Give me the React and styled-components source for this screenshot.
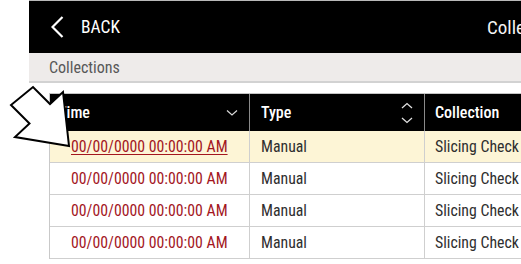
import React from "react";
import styled, { createGlobalStyle } from "styled-components";

const GlobalStyle = createGlobalStyle`
  html, body { margin: 0; padding: 0; background: #ffffff; }
  body {
    font-family: "Roboto Condensed", Roboto, "Liberation Sans", sans-serif;
    overflow: hidden;
  }
`;

const Page = styled.div`
  position: relative;
  width: 521px;
  height: 264px;
  overflow: hidden;
  background: #fff;
`;

const Shell = styled.div`
  margin-left: 29px;
  width: 492px;
  border-top: 1px solid #b9b9b9;
`;

const TopBar = styled.header`
  height: 52px;
  background: #000;
  display: grid;
  grid-template-columns: 458px auto;
  align-items: center;
  overflow: hidden;
  white-space: nowrap;
`;

const BackButton = styled.div`
  display: flex;
  align-items: center;
  gap: 17px;
  padding-left: 22px;
  color: #fff;
`;

const BackLabel = styled.span`
  font-size: 17.5px;
  font-weight: 400;
`;

const Title = styled.h1`
  margin: 0;
  font-size: 19px;
  font-weight: 400;
  color: #f4f4f4;
`;

const Crumbs = styled.nav`
  height: 28px;
  background: #eeebea;
  border-bottom: 2px solid #d2d2d2;
  display: flex;
  align-items: center;
  padding-left: 20px;
  font-size: 16px;
  color: #585858;
`;

const TableWrap = styled.div`
  margin: 10px 0 0 20px;
`;

const Grid = styled.div`
  display: grid;
  grid-template-columns: 200px 175px 200px;
  border-top: 1px solid #c4c4c4;
  border-left: 1px solid #c9c9c9;
`;

const HeadCell = styled.div`
  height: 37px;
  box-sizing: border-box;
  background: #000;
  color: #fff;
  font-size: 16px;
  font-weight: 500;
  display: flex;
  align-items: center;
  padding: 0 11px 0 ${(p) => p.$pad}px;
  border-right: 1px solid #8a8a8a;
  white-space: nowrap;
`;

const HeadLabel = styled.span`
  flex: 1;
`;

const Cell = styled.div`
  height: 32px;
  box-sizing: border-box;
  background: ${(p) => (p.$active ? "#fdf5d6" : "#ffffff")};
  border-right: 1px solid #cfcfcf;
  border-bottom: 1px solid #cfcfcf;
  display: flex;
  align-items: center;
  padding-left: ${(p) => p.$pad}px;
  font-size: 15.8px;
  color: #2e2e2e;
  white-space: nowrap;
  overflow: hidden;
`;

const TimeLink = styled.span`
  color: #a3161e;
  text-decoration: ${(p) => (p.$active ? "underline" : "none")};
  text-underline-offset: 2px;
`;

const Pointer = styled.svg`
  position: absolute;
  left: 0;
  top: 0;
  pointer-events: none;
`;

const ChevronLeft = () => (
  <svg width="13" height="22" viewBox="0 0 13 22">
    <polyline points="11.5,1 1.5,11 11.5,21" fill="none" stroke="#fff" strokeWidth="2.2" />
  </svg>
);

const SortDown = () => (
  <svg width="12" height="8" viewBox="0 0 12 8">
    <polyline points="1,1.5 6,6 11,1.5" fill="none" stroke="#d8d8d8" strokeWidth="1.2" />
  </svg>
);

const SortBoth = () => (
  <svg width="12" height="22" viewBox="0 0 12 22">
    <polyline points="1,6 6,1.5 11,6" fill="none" stroke="#e0e0e0" strokeWidth="1.3" />
    <polyline points="1,16 6,20.5 11,16" fill="none" stroke="#e0e0e0" strokeWidth="1.3" />
  </svg>
);

const rows = [0, 1, 2, 3];

export default function App() {
  return (
    <Page>
      <GlobalStyle />
      <Shell>
        <TopBar>
          <BackButton>
            <ChevronLeft />
            <BackLabel>BACK</BackLabel>
          </BackButton>
          <Title>Collections</Title>
        </TopBar>
        <Crumbs>Collections</Crumbs>
        <TableWrap>
          <Grid>
            <HeadCell $pad={8}>
              <HeadLabel>Time</HeadLabel>
              <SortDown />
            </HeadCell>
            <HeadCell $pad={11}>
              <HeadLabel>Type</HeadLabel>
              <SortBoth />
            </HeadCell>
            <HeadCell $pad={10}>
              <HeadLabel>Collection</HeadLabel>
            </HeadCell>
            {rows.map((i) => (
              <React.Fragment key={i}>
                <Cell $active={i === 0} $pad={21}>
                  <TimeLink $active={i === 0}>00/00/0000 00:00:00 AM</TimeLink>
                </Cell>
                <Cell $active={i === 0} $pad={11}>Manual</Cell>
                <Cell $active={i === 0} $pad={10}>Slicing Check</Cell>
              </React.Fragment>
            ))}
          </Grid>
        </TableWrap>
      </Shell>
      <Pointer width="80" height="160" viewBox="0 0 80 160">
        <polygon
          points="69,146 15,137 29.5,123.5 11,105 33,87 50,104 63,92"
          fill="#fff"
          stroke="#000"
          strokeWidth="2"
          strokeLinejoin="miter"
        />
      </Pointer>
    </Page>
  );
}
